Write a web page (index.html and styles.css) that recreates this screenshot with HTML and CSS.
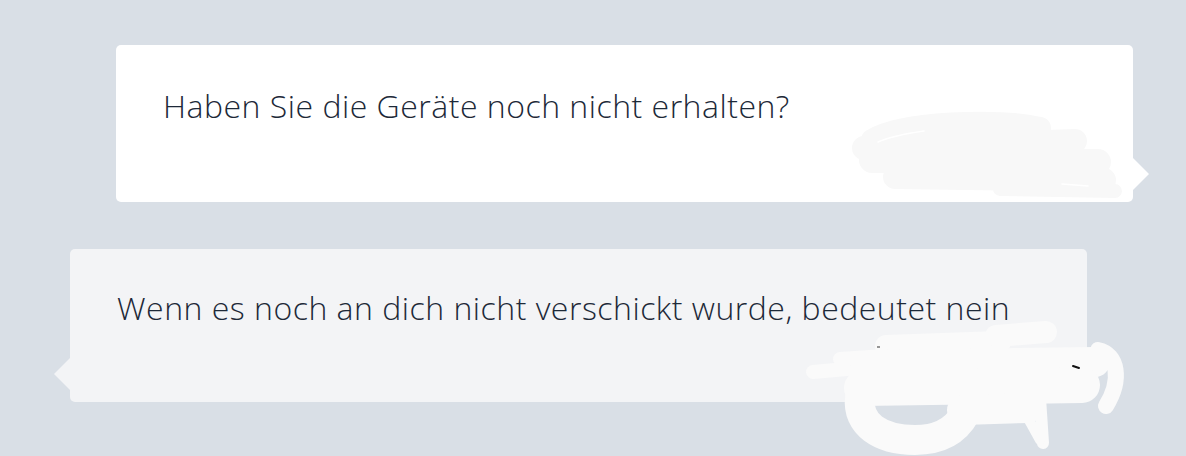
FILE: index.html
```html
<!DOCTYPE html>
<html lang="de">
<head>
    <meta charset="UTF-8">
    <title>Chat</title>
    <link rel="stylesheet" href="styles.css">
</head>
<body>
    <div class="thread">
        <div class="bubble bubble-in">
            <p class="text">Haben Sie die Geräte noch nicht erhalten?</p>
        </div>
        <div class="bubble bubble-out">
            <p class="text">Wenn es noch an dich nicht verschickt wurde, bedeutet nein</p>
        </div>
    </div>

    <!-- übermalte Stellen -->
    <svg class="scribble" width="1186" height="456" viewBox="0 0 1186 456">
        <g fill="none" stroke="#f8f8f8" stroke-linecap="round" stroke-linejoin="round">
            <path d="M872 140 C 900 122, 1000 118, 1040 128" stroke-width="22"/>
            <path d="M864 148 L1075 141" stroke-width="24"/>
            <path d="M872 160 L1098 162" stroke-width="26"/>
            <path d="M895 177 L1104 180" stroke-width="24"/>
            <path d="M1000 189 L1115 191" stroke-width="14"/>
        </g>
        <g fill="none" stroke="#ffffff" stroke-linecap="round" stroke-width="1.5">
            <path d="M878 142 C 892 136, 910 133, 924 131"/>
            <path d="M1062 184 L1088 186"/>
        </g>
        <g fill="none" stroke="#fafafa" stroke-linecap="round" stroke-linejoin="round">
            <path d="M813 372 L880 366" stroke-width="14"/>
            <path d="M840 359 L900 355" stroke-width="14"/>
            <path d="M886 346 L1000 342" stroke-width="22"/>
            <path d="M996 336 L1046 332" stroke-width="22"/>
            <path d="M876 365 L1095 362" stroke-width="30"/>
            <path d="M862 388 L1082 385" stroke-width="36"/>
            <path d="M962 410 L1028 408" stroke-width="30"/>
            <path d="M860 398 C 857 424, 880 440, 915 440 C 940 440, 956 430, 965 414" stroke-width="30"/>
            <path d="M1040 398 L1043 443" stroke-width="12"/>
            <path d="M1020 404 L1040 440" stroke-width="10"/>
            <path d="M1098 350 C 1118 354, 1122 380, 1106 406" stroke-width="16"/>
        </g>
        <path d="M1073 366 L1079 368" stroke="#111" stroke-width="2" stroke-linecap="round"/>
        <path d="M877 347 L880 347" stroke="#333" stroke-width="1"/>
    </svg>
</body>
</html>
```

FILE: styles.css
```css
body {
    margin: 0;
    background-color: #d9dfe6;
    font-family: 'Open Sans', 'Lato', sans-serif;
    color: #1d2938;
}

.thread {
    display: flex;
    flex-direction: column;
    gap: 47px;
    padding-top: 45px;
}

.bubble {
    position: relative;
    width: 1017px;
    box-sizing: border-box;
    padding: 0 47px;
    border-radius: 5px;
}

.bubble-in {
    margin-left: 116px;
    height: 157px;
    padding-top: 39px;
    background-color: #ffffff;
}

.bubble-out {
    margin-left: 70px;
    height: 153px;
    padding-top: 37px;
    background-color: #f3f4f6;
}

.bubble::after {
    content: "";
    position: absolute;
    width: 24px;
    height: 24px;
    transform: rotate(45deg);
}

.bubble-in::after {
    right: -11px;
    top: 117px;
    background-color: #ffffff;
}

.bubble-out::after {
    left: -11px;
    top: 113px;
    background-color: #f3f4f6;
}

.text {
    margin: 0;
    font-size: 32px;
    font-weight: 300;
    line-height: 44px;
    letter-spacing: 0.5px;
}

.scribble {
    position: absolute;
    left: 0;
    top: 0;
}
```
